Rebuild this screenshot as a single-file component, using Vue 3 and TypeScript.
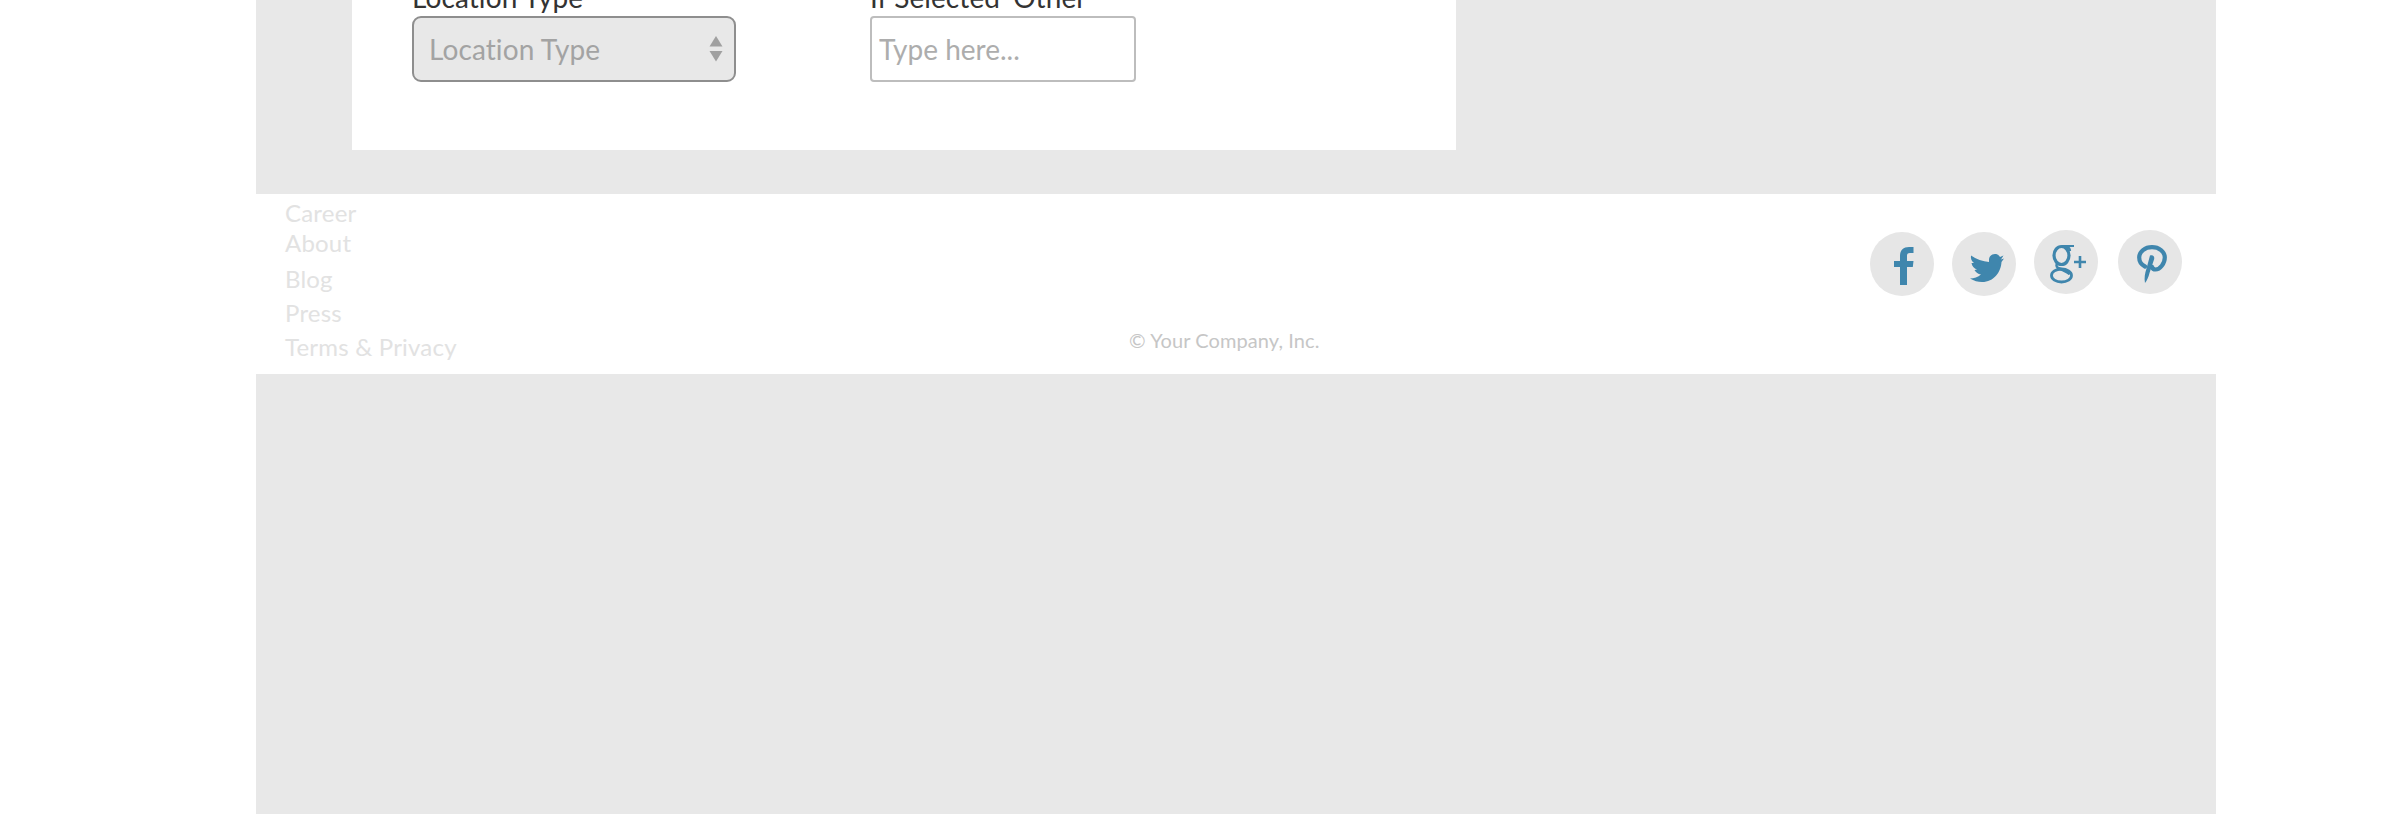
<script setup lang="ts">
const links: string[] = ['Career', 'About', 'Blog', 'Press', 'Terms & Privacy']
</script>

<template>
  <div class="page">
    <main class="shell">
      <section class="card">
        <div class="field field-select">
          <label class="label" for="loc">Location Type</label>
          <div class="select-wrap">
            <select id="loc" class="select">
              <option>Location Type</option>
            </select>
            <svg class="arrows" width="14" height="26" viewBox="0 0 14 26" aria-hidden="true">
              <path d="M7 0 13.5 10.5H.5Z" />
              <path d="M7 25.5 13.5 15H.5Z" />
            </svg>
          </div>
        </div>
        <div class="field field-other">
          <label class="label" for="other">If Selected 'Other'</label>
          <input id="other" class="input" type="text" placeholder="Type here..." />
        </div>
      </section>

      <footer class="footer">
        <ul class="links">
          <li v-for="l in links" :key="l" class="link">{{ l }}</li>
        </ul>
        <p class="copy">© Your Company, Inc.</p>
        <div class="social">
          <a class="circle low" aria-label="Facebook">
            <svg class="nudge" width="20" height="38" viewBox="0 0 20 38"><path d="M6 38V20H0V14H6V9C6 3 9.500 0 15 0H19.500V6H16C13.500 6 13 7 13 9V14H19.500L18.800 20H13V38Z" /></svg>
          </a>
          <a class="circle low" aria-label="Twitter">
            <svg class="nudge-bird" width="34" height="28" viewBox="0 0 34 28"><path d="M33.500 1.500 30 3C29 1 27 0 25 0 21.500 0 19 2.500 19 6L19 8C13 7.500 6 5 1 1.500 .5 4.500 1.500 7 4 9L1.500 9C2 12 4 14.500 7 15.500L4.500 16C6 18.500 8 20 11 20.500 8 23 4 24.500 0 24.500 4 27 8 28 12 28 24 28 31 18 31.500 8L34 4.500 31 5.500Z" /></svg>
          </a>
          <a class="circle" aria-label="Google Plus">
            <svg class="nudge" width="36" height="40" viewBox="0 0 36 40">
              <g fill="none" stroke="#3f86ad">
                <ellipse cx="11.500" cy="11.500" rx="7.500" ry="9" stroke-width="3.200" />
                <ellipse cx="11.500" cy="31.500" rx="10" ry="6.500" stroke-width="2.800" />
                <path d="M7 20c-1.500 2 0 3.500 2.500 4.500 4 2 9 3.500 10 6" stroke-width="2.600" />
                <path d="M12 2h12M17 2.500c2 1 3 2.500 3 4.500" stroke-width="2.200" />
                <path d="M30 12v12M24 18h12" stroke-width="2.600" />
              </g>
            </svg>
          </a>
          <a class="circle" aria-label="Pinterest">
            <svg class="nudge" width="30" height="38" viewBox="0 0 30 38">
              <path fill="none" stroke="#3f86ad" stroke-width="4.200" stroke-linecap="round" d="M8 21.500C4 19.500 2.200 16 2.200 12.500 2.200 6.500 8 2.200 15 2.200S27.800 6.500 27.800 12.500 23 24.500 18.500 24.500C16.500 24.500 15.500 23.500 15 22" />
              <path d="M13 10.500C15.500 9.500 17.800 11 17.200 14L12.500 28C11.500 32 10 35.500 8 38 7 33 8 28 9.500 23.500Z" />
            </svg>
          </a>
        </div>
      </footer>
    </main>
  </div>
</template>

<style>
html, body { margin: 0; background: #fff; }
</style>

<style scoped>
.page {
  height: 814px;
  overflow: hidden;
  font-family: Lato, "Liberation Sans", sans-serif;
  font-variant-ligatures: none;
}
.shell {
  width: 1960px;
  height: 814px;
  margin-left: 256px;
  background: #e8e8e8;
  overflow: hidden;
}
.card {
  display: flex;
  width: 1104px;
  height: 150px;
  margin-left: 96px;
  background: #fff;
  overflow: hidden;
}
.field {
  display: flex;
  flex-direction: column;
  flex: none;
  margin-top: -18px;
}
.field-select { margin-left: 60px; width: 324px; }
.field-other { margin-left: 134px; width: 266px; }
.label {
  height: 34px;
  font-size: 28px;
  line-height: 30px;
  color: #333;
  white-space: nowrap;
  letter-spacing: 0.1px;
}
.select-wrap { position: relative; }
.select {
  display: block;
  box-sizing: border-box;
  width: 324px;
  height: 66px;
  padding: 0 0 0 15px;
  appearance: none;
  border: 2px solid #8e8e8e;
  border-radius: 9px;
  background: #e8e8e8;
  color: #a3a3a3;
  font: 28px Lato, "Liberation Sans", sans-serif;
  font-variant-ligatures: none;
  letter-spacing: 0.1px;
}
.arrows {
  position: absolute;
  right: 13px;
  top: 20px;
  fill: #a0a0a0;
}
.input {
  display: block;
  box-sizing: border-box;
  width: 266px;
  height: 66px;
  padding: 0 0 0 7px;
  border: 2px solid #bdbdbd;
  border-radius: 4px;
  outline: none;
  background: #fff;
  font: 28px Lato, "Liberation Sans", sans-serif;
}
.input::placeholder { color: #adadad; opacity: 1; }
.footer {
  position: relative;
  box-sizing: border-box;
  display: flex;
  height: 180px;
  margin-top: 44px;
  padding-left: 29px;
  background: #fff;
}
.links {
  margin: 0;
  padding: 4px 0 0;
  list-style: none;
  display: flex;
  flex-direction: column;
}
.link {
  font-size: 24px;
  line-height: 30px;
  color: #e2e2e2;
  height: 34px;
  letter-spacing: 0.2px;
}
.link:first-child { height: 30px; }
.link:nth-child(2) { height: 36px; }
.copy {
  position: absolute;
  left: 873px;
  top: 133px;
  margin: 0;
  font-size: 20px;
  line-height: 26px;
  color: #c6c6c6;
  letter-spacing: 0.08px;
}
.social {
  margin-left: auto;
  margin-right: 34px;
  display: flex;
  padding-top: 36px;
}
.circle {
  display: flex;
  align-items: center;
  justify-content: center;
  width: 64px;
  height: 64px;
  margin-left: 18px;
  border-radius: 50%;
  background: #e6e6e6;
  fill: #3f86ad;
}
.circle:last-child { margin-left: 20px; }
.low { margin-top: 2px; }
.nudge { margin: 4px 0 0 4px; }
.nudge-bird { margin: 7px 0 0 5px; }
</style>
